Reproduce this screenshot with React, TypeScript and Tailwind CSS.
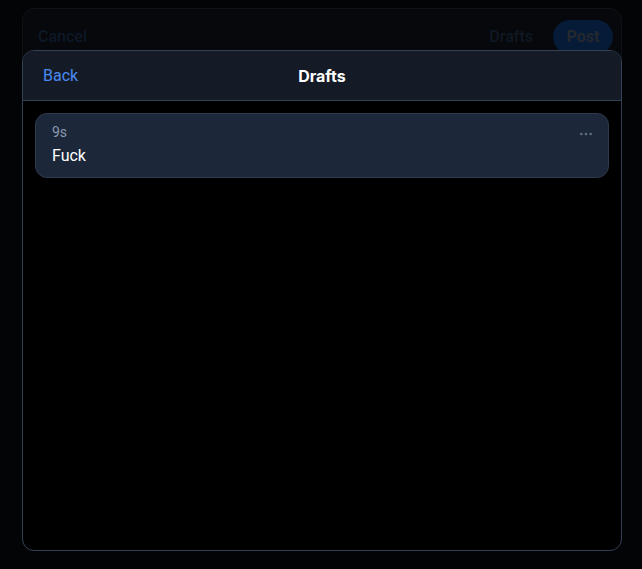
import { MoreHorizontal } from 'lucide-react';

function DraftCard({ age, text }: { age: string; text: string }) {
  return (
    <div className="relative rounded-xl border border-[#2e3a4d] bg-[#1c2739] px-4 pt-[8px] pb-[9px]">
      <div className="text-sm text-[#8a9ab0]">{age}</div>
      <div className="mt-[2px] text-base text-white">{text}</div>
      <button type="button" className="absolute right-[14px] top-[12px] text-[#5f6e84]">
        <MoreHorizontal size={16} strokeWidth={2} />
      </button>
    </div>
  );
}

export default function App() {
  return (
    <div className="h-[569px] w-[642px] bg-[#030405] px-[22px] pt-[8px] font-['Roboto',sans-serif]">
      <div className="relative h-[543px] w-[600px] rounded-xl border border-[#0e1217] bg-[#06080b]">
        <div className="flex h-[54px] items-center justify-between pl-[15px] pr-[8px] pt-[2px]">
          <span className="text-base font-medium text-[#0d1828]">Cancel</span>
          <div className="flex items-center gap-5">
            <span className="text-base font-medium text-[#0f1823]">Drafts</span>
            <span className="flex h-[34px] w-[60px] items-center justify-center rounded-full bg-[#061b38] text-base font-bold text-[#24282f]">
              Post
            </span>
          </div>
        </div>

        <div className="absolute left-[-1px] right-[-1px] top-[41px] bottom-[-1px] flex flex-col overflow-hidden rounded-xl border border-[#334155] bg-black">
          <div className="relative flex h-[50px] shrink-0 items-center border-b border-[#334155] bg-[#151b26] px-5">
            <button type="button" className="text-base text-[#4a8af4]">
              Back
            </button>
            <div className="pointer-events-none absolute inset-x-0 text-center font-['Inter',sans-serif] text-base font-bold text-white">
              Drafts
            </div>
          </div>
          <div className="p-3">
            <DraftCard age="9s" text="Fuck" />
          </div>
        </div>
      </div>
    </div>
  );
}
